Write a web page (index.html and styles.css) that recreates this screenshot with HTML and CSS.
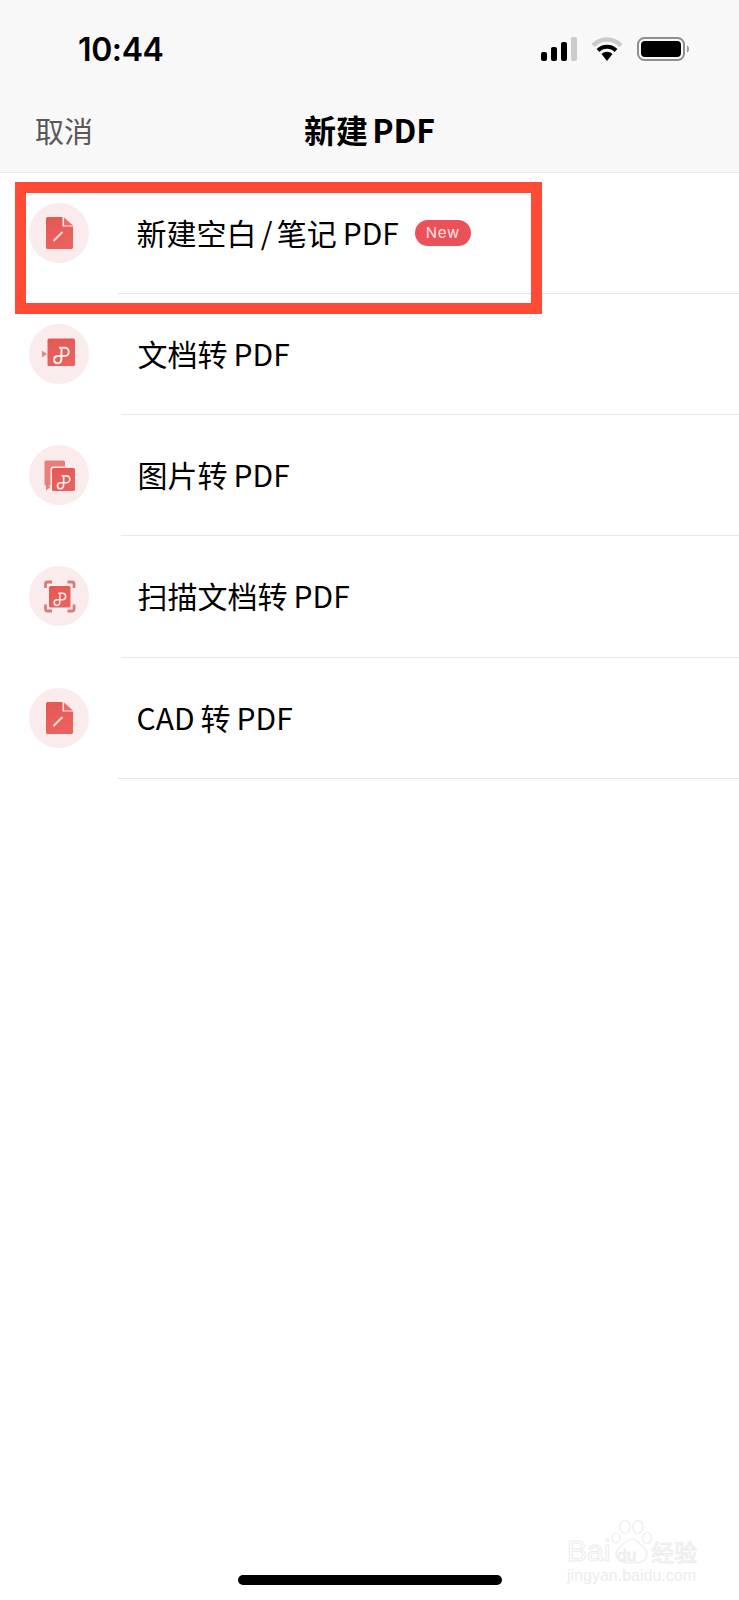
FILE: index.html
```html
<!DOCTYPE html>
<html>
<head>
  <meta charset="utf-8">
  <title>新建 PDF</title>
  <link rel="stylesheet" href="styles.css">
</head>
<body>
<svg class="defs" width="0" height="0">
  <symbol id="pdf-mark" viewBox="0 0 28 28">
    <path d="M12.500 9.500H17.500a4.200 4.200 0 0 1 0 8.400H11c-2.500 0-4.300 1.500-4.300 3.600s1.500 3.800 3.700 3.800c2.800 0 3.800-2.500 3.800-6V9.500" fill="none" stroke="#fff" stroke-opacity=".9" stroke-width="2" stroke-linecap="round"/>
  </symbol>
  <symbol id="doc-icon" viewBox="0 0 60 60">
    <path d="M18.500 14H33.500V23.500H44V44.500a1.500 1.500 0 0 1-1.500 1.500H18.500a1.500 1.500 0 0 1-1.500-1.500V15.500a1.500 1.500 0 0 1 1.500-1.500Z" fill="url(#doc-fill)"/>
    <path d="M35 14.500L44 22.500H35Z" fill="#ee6d6a"/>
    <path d="M25 37.500L33 29.500" stroke="#fbdcda" stroke-width="2" stroke-linecap="round"/>
  </symbol>
  <linearGradient id="doc-fill" x1="0" y1="0" x2="0.300" y2="1">
    <stop offset="0" stop-color="#e35855"/>
    <stop offset="1" stop-color="#ea625d"/>
  </linearGradient>
</svg>

<div class="status-bar">
  <span class="time">10:44</span>
  <div class="status-icons">
    <svg width="36" height="24" viewBox="0 0 36 24">
      <rect x="0" y="15" width="6" height="9" rx="2"/>
      <rect x="10" y="10" width="6" height="14" rx="2"/>
      <rect x="20" y="5" width="6" height="19" rx="2"/>
      <rect x="30" y="0" width="6" height="24" rx="2" fill="#cbcbcb"/>
    </svg>
    <svg width="32" height="24" viewBox="0 0 32 24">
      <path d="M2 8.500C10 .500 22 .500 30 8.500" fill="none" stroke="#cbcbcb" stroke-width="4.500"/>
      <path d="M7 13.500C12 8.500 20 8.500 25 13.500" fill="none" stroke="#000" stroke-width="4"/>
      <path d="M10.500 17C14 14 18 14 21.500 17L16 24Z"/>
    </svg>
    <svg width="52" height="24" viewBox="0 0 52 24">
      <rect x="1" y="1" width="46" height="22" rx="6.500" fill="none" stroke="#8e8e8e" stroke-width="2"/>
      <rect x="4" y="4" width="40" height="16" rx="4"/>
      <path d="M50 8.500c1.500.5 2 2 2 3.500s-.5 3-2 3.500Z" fill="#9a9a9a"/>
    </svg>
  </div>
</div>

<div class="nav-bar">
  <span class="cancel">取消</span>
  <span class="title">新建 PDF</span>
</div>

<div class="list">
  <div class="row">
    <div class="circle">
      <svg width="60" height="60"><use href="#doc-icon"/></svg>
    </div>
    <div class="row-body">
      <span class="tight">新建空白 / 笔记&#8201;PDF</span>
      <span class="badge">New</span>
    </div>
  </div>

  <div class="row wide">
    <div class="circle">
      <svg width="60" height="60" viewBox="0 0 60 60">
        <path d="M13 26.500L18 30L13 33.500Z" fill="#d98a88"/>
        <rect x="18.500" y="14.500" width="27.500" height="27.500" rx="1.500" fill="url(#doc-fill)"/>
        <use href="#pdf-mark" x="18.500" y="14.500" width="27.500" height="27.500"/>
      </svg>
    </div>
    <div class="row-body"><span>文档转&#8201;PDF</span></div>
  </div>

  <div class="row wide">
    <div class="circle">
      <svg width="60" height="60" viewBox="0 0 60 60">
        <rect x="15.500" y="15.500" width="20.500" height="25" rx="1.500" fill="#e67e7c"/>
        <path d="M17 38.500L21.500 42L17 45.500Z" fill="#e67e7c"/>
        <rect x="21.500" y="21.500" width="25.500" height="25.500" rx="3" fill="#faeced"/>
        <rect x="23" y="23" width="23" height="23" rx="1.500" fill="url(#doc-fill)"/>
        <use href="#pdf-mark" x="23" y="23" width="23" height="23"/>
      </svg>
    </div>
    <div class="row-body"><span>图片转&#8201;PDF</span></div>
  </div>

  <div class="row wide">
    <div class="circle">
      <svg width="60" height="60" viewBox="0 0 60 60">
        <path d="M16.500 22V18a2 2 0 0 1 2-2H23M38.500 16H43a2 2 0 0 1 2 2V22M45 38.500V43a2 2 0 0 1-2 2H38.500M23 45H18.500a2 2 0 0 1-2-2V38.500" fill="none" stroke="#d67d7c" stroke-width="2.800"/>
        <rect x="20" y="20" width="21.500" height="21.500" rx="1.500" fill="url(#doc-fill)"/>
        <use href="#pdf-mark" x="20" y="20" width="21.500" height="21.500"/>
      </svg>
    </div>
    <div class="row-body"><span>扫描文档转&#8201;PDF</span></div>
  </div>

  <div class="row">
    <div class="circle">
      <svg width="60" height="60"><use href="#doc-icon"/></svg>
    </div>
    <div class="row-body"><span>CAD&#8201;转&#8201;PDF</span></div>
  </div>
</div>

<div class="home-bar"></div>

<!-- annotation drawn over the first row -->
<div class="red-box"></div>

<div class="watermark">
  <svg class="paw" width="42" height="46" viewBox="0 0 42 46">
    <g fill="none" stroke="#ececec" stroke-width="1.200">
      <ellipse cx="5" cy="18" rx="4" ry="5"/>
      <ellipse cx="14" cy="7" rx="5" ry="6.500"/>
      <ellipse cx="27" cy="7" rx="5" ry="6.500"/>
      <ellipse cx="36" cy="18" rx="4.500" ry="5.500"/>
      <path d="M21 19c4 0 6 3 9 6 4 3 6 5 6 9 0 6-5 9-15 9S5 40 5 34c0-4 3-6 6-9 3-3 6-6 10-6Z"/>
    </g>
  </svg>
  <div class="wm-main">Bai<span class="wm-du">du</span><span class="wm-cn">经验</span></div>
  <div class="wm-url">jingyan.baidu.com</div>
</div>
</body>
</html>
```

FILE: styles.css
```css
* {
  box-sizing: border-box;
}

html, body {
  margin: 0;
  padding: 0;
}

body {
  position: relative;
  width: 739px;
  height: 1600px;
  display: flex;
  flex-direction: column;
  background: #fff;
  color: #000;
  font-family: "Noto Sans CJK SC", "Noto Sans", sans-serif;
  overflow: hidden;
}

.defs {
  position: absolute;
}

.status-bar {
  height: 98px;
  padding: 0 50px 0 78px;
  display: flex;
  align-items: center;
  justify-content: space-between;
  background: #f8f8f8;
}

.time {
  font-family: Inter, sans-serif;
  font-size: 32px;
  font-weight: 600;
  letter-spacing: -0.4px;
}

.status-icons {
  display: flex;
  align-items: center;
  gap: 14px;
}

.status-icons svg {
  display: block;
}

.nav-bar {
  position: relative;
  height: 74.500px;
  display: flex;
  align-items: center;
  justify-content: center;
  padding-bottom: 12px;
  background: #f8f8f8;
  border-bottom: 1px solid #e9e9e9;
}

.cancel {
  position: absolute;
  left: 35px;
  top: 10px;
  font-size: 29px;
  line-height: 44px;
  color: #595959;
}

.title {
  font-size: 32px;
  line-height: 44px;
  font-weight: 700;
  word-spacing: -3px;
}

.row {
  height: 121.250px;
  display: flex;
  padding-left: 28.500px;
}

.circle {
  flex: none;
  width: 60px;
  height: 60px;
  margin-top: 30px;
  border-radius: 50%;
  background: #faeced;
}

.circle svg {
  display: block;
}

.row-body {
  flex: 1;
  margin-left: 29.500px;
  padding-left: 18.500px;
  height: 100%;
  display: flex;
  align-items: flex-start;
  padding-top: 37px;
  font-size: 30px;
  line-height: 44px;
  border-bottom: 1px solid #e6e8ec;
}

.row.wide .row-body {
  margin-left: 32px;
  padding-left: 17px;
}

.tight {
  word-spacing: -2.500px;
}

.badge {
  margin: 10.500px 0 0 16px;
  width: 56px;
  height: 26px;
  border-radius: 13px;
  background: #ec5058;
  color: #fbe4e4;
  font-family: Inter, sans-serif;
  font-size: 15px;
  line-height: 26px;
  letter-spacing: 0.8px;
  text-align: center;
}

.home-bar {
  margin: auto 0 15px 238px;
  width: 264px;
  height: 10px;
  border-radius: 5px;
  background: #000;
}

.red-box {
  position: absolute;
  left: 15px;
  top: 182px;
  width: 527px;
  height: 132px;
  border: 11px solid #ff4a36;
}

.watermark {
  position: absolute;
  left: 567px;
  top: 1520px;
  width: 134px;
  height: 64px;
}

.paw {
  position: absolute;
  left: 44px;
  top: 0;
}

.wm-main {
  position: absolute;
  left: 0;
  top: 16px;
  white-space: nowrap;
  font-family: "Liberation Sans", sans-serif;
  font-size: 30px;
  line-height: 30px;
  color: #fff;
  -webkit-text-stroke: 1px #ececec;
}

.wm-du {
  font-size: 17px;
  margin-left: 7px;
}

.wm-cn {
  font-family: "Noto Sans CJK SC", sans-serif;
  font-size: 23px;
  margin-left: 15px;
}

.wm-url {
  position: absolute;
  left: 0;
  top: 47px;
  white-space: nowrap;
  font-family: "Liberation Sans", sans-serif;
  font-size: 16px;
  line-height: 18px;
  color: #ececec;
}
```
